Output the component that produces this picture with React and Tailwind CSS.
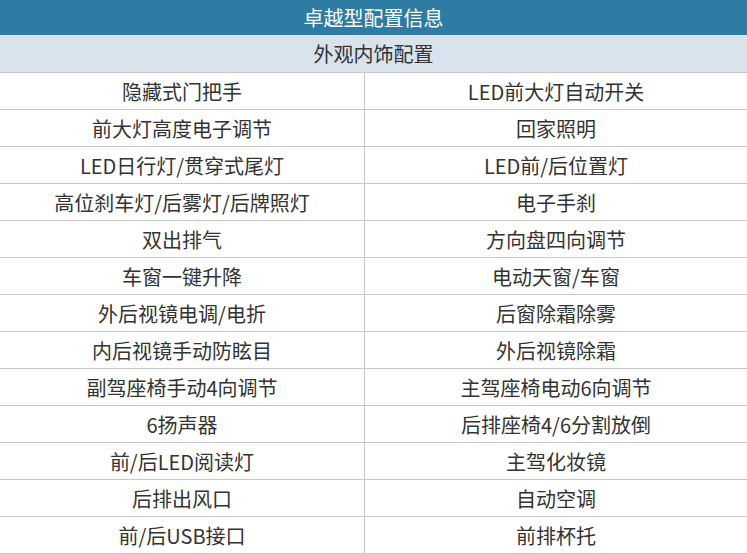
const rows = [
  ["隐藏式门把手", "LED前大灯自动开关"],
  ["前大灯高度电子调节", "回家照明"],
  ["LED日行灯/贯穿式尾灯", "LED前/后位置灯"],
  ["高位刹车灯/后雾灯/后牌照灯", "电子手刹"],
  ["双出排气", "方向盘四向调节"],
  ["车窗一键升降", "电动天窗/车窗"],
  ["外后视镜电调/电折", "后窗除霜除雾"],
  ["内后视镜手动防眩目", "外后视镜除霜"],
  ["副驾座椅手动4向调节", "主驾座椅电动6向调节"],
  ["6扬声器", "后排座椅4/6分割放倒"],
  ["前/后LED阅读灯", "主驾化妆镜"],
  ["后排出风口", "自动空调"],
  ["前/后USB接口", "前排杯托"],
];

export default function App() {
  return (
    <div
      className="w-[747px] h-[554px] bg-white text-[20px] text-[#333] overflow-hidden"
      style={{ fontFamily: '"Microsoft YaHei", "Noto Sans CJK SC", sans-serif' }}
    >
      <div className="h-[35px] pt-px bg-[#2e7ba3] text-white flex items-center justify-center">
        卓越型配置信息
      </div>
      <div className="h-[38px] pt-px bg-[#d8e3ec] border-b border-[#c8c8c8] flex items-center justify-center">
        外观内饰配置
      </div>
      {rows.map(([left, right]) => (
        <div
          key={left}
          className="grid grid-cols-[365px_1fr] h-[37px] border-b border-[#c8c8c8]"
        >
          <div className="border-r border-[#c8c8c8] pt-px flex items-center justify-center">
            {left}
          </div>
          <div className="pt-px flex items-center justify-center">{right}</div>
        </div>
      ))}
    </div>
  );
}
